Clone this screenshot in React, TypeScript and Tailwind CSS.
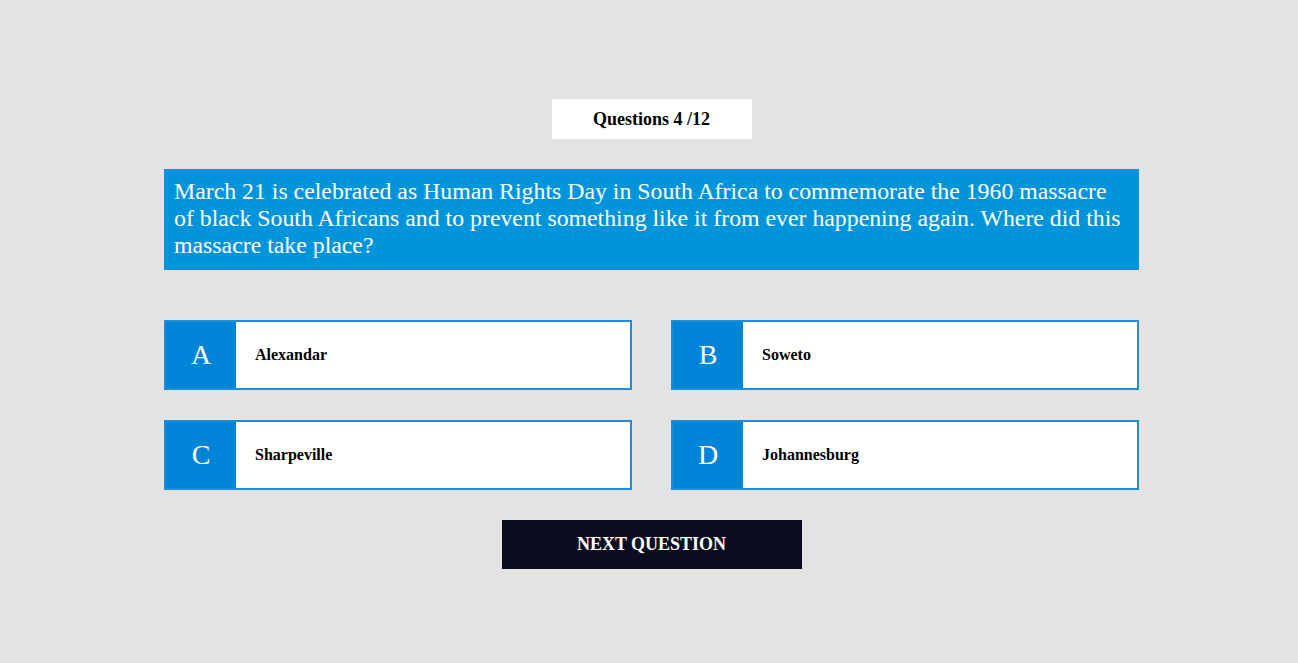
const QUESTION =
  'March 21 is celebrated as Human Rights Day in South Africa to commemorate the 1960 massacre of black South Africans and to prevent something like it from ever happening again. Where did this massacre take place?';

const OPTIONS = [
  { key: 'A', label: 'Alexandar' },
  { key: 'B', label: 'Soweto' },
  { key: 'C', label: 'Sharpeville' },
  { key: 'D', label: 'Johannesburg' },
];

function Option({ letter, label }: { letter: string; label: string }) {
  return (
    <button
      type="button"
      className="flex h-[70px] items-stretch border-2 border-[#1a8fd6] bg-white text-left">
      <span className="flex w-[70px] shrink-0 items-center justify-center bg-[#0084d8] text-[28px] text-white">
        {letter}
      </span>
      <span className="flex items-center pl-[19px] text-[16px] font-bold text-black">{label}</span>
    </button>
  );
}

export default function App() {
  return (
    <div
      className="min-h-[663px] bg-[#e3e3e3] pt-[99px]"
      style={{ fontFamily: '"Liberation Serif", "Times New Roman", serif' }}>
      <div className="ml-[164px] flex w-[975px] flex-col items-center">
        <div className="flex h-[40px] w-[200px] items-center justify-center bg-white text-[18px] font-bold text-black">
          Questions 4 /12
        </div>

        <div className="mt-[30px] h-[101px] w-full bg-[#0095db] px-[10px] pt-[9px] text-[23.8px] leading-[27px] text-white">
          {QUESTION}
        </div>

        <div className="mt-[50px] grid w-full grid-cols-2 gap-x-[39px] gap-y-[30px]">
          {OPTIONS.map((o) => (
            <Option key={o.key} letter={o.key} label={o.label} />
          ))}
        </div>

        <button
          type="button"
          className="mt-[30px] h-[49px] w-[300px] bg-[#0b0e1f] text-[18px] font-bold text-white">
          NEXT QUESTION
        </button>
      </div>
    </div>
  );
}
